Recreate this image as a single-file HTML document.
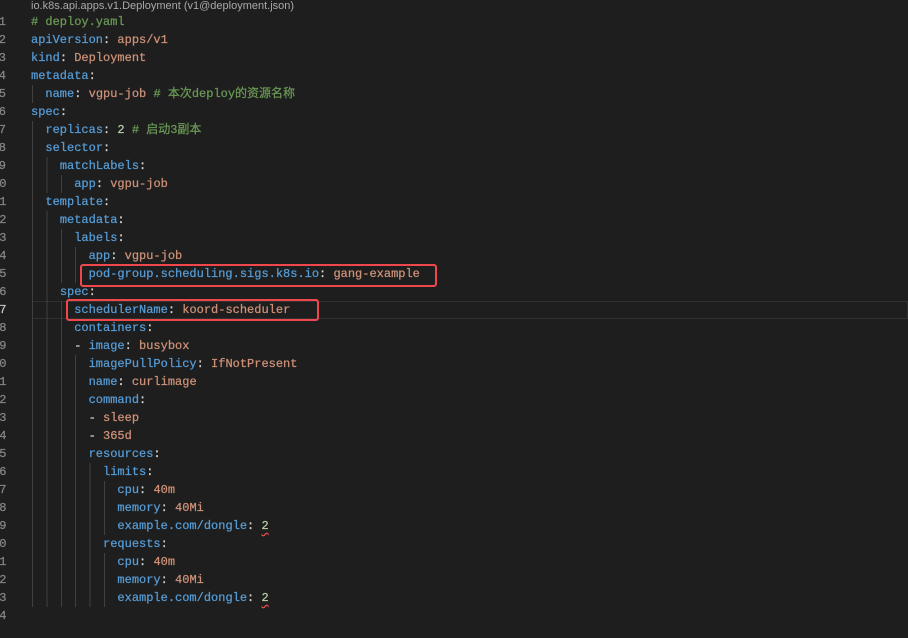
<!DOCTYPE html>
<html><head><meta charset="utf-8"><style>
html,body{margin:0;padding:0;background:#1e1e1e;width:908px;height:638px;overflow:hidden}
.t{position:absolute;left:31px;top:0;font:11px "Liberation Sans",sans-serif;color:#a9a9a9;line-height:12px}
.l{position:absolute;left:0;height:18px;width:908px;font:12px/18px "Liberation Mono","Noto Sans CJK SC",monospace;white-space:pre;color:#d4d4d4;-webkit-text-stroke:0.25px currentColor;margin-top:1px}
.n{position:absolute;left:-8px;width:14px;text-align:right;color:#858585}
.c{position:absolute;left:31px}
.g{position:absolute;left:32px;top:0;height:18px;background:repeating-linear-gradient(to right,#404040 0 1px,transparent 1px 14.4px)}
.k{color:#569cd6}.s{color:#ce9178}.m{color:#6a9955}.d{color:#b5cea8}
.sq{text-decoration:underline wavy #f14c4c;text-underline-offset:3px}
.box{position:absolute;border:2.5px solid #f0474d;border-radius:3px;box-sizing:border-box}
.cur{position:absolute;left:32px;top:301px;width:876px;height:18px;border:1px solid #303030;box-sizing:border-box}
</style></head><body>
<div class="t">io.k8s.api.apps.v1.Deployment (v1@deployment.json)</div>
<div class="cur"></div>
<div class="l" style="top:12px"><span class="n">1</span><span class="c"><span class="m"># deploy.yaml</span></span></div>
<div class="l" style="top:30px"><span class="n">2</span><span class="c"><span class="k">apiVersion</span>: <span class="s">apps/v1</span></span></div>
<div class="l" style="top:48px"><span class="n">3</span><span class="c"><span class="k">kind</span>: <span class="s">Deployment</span></span></div>
<div class="l" style="top:66px"><span class="n">4</span><span class="c"><span class="k">metadata</span>:</span></div>
<div class="l" style="top:84px"><span class="n">5</span><span class="g" style="width:14px"></span><span class="c">  <span class="k">name</span>: <span class="s">vgpu-job</span> <span class="m"># 本次deploy的资源名称</span></span></div>
<div class="l" style="top:102px"><span class="n">6</span><span class="c"><span class="k">spec</span>:</span></div>
<div class="l" style="top:120px"><span class="n">7</span><span class="g" style="width:14px"></span><span class="c">  <span class="k">replicas</span>: <span class="d">2</span> <span class="m"># 启动3副本</span></span></div>
<div class="l" style="top:138px"><span class="n">8</span><span class="g" style="width:14px"></span><span class="c">  <span class="k">selector</span>:</span></div>
<div class="l" style="top:156px"><span class="n">9</span><span class="g" style="width:28px"></span><span class="c">    <span class="k">matchLabels</span>:</span></div>
<div class="l" style="top:174px"><span class="n">10</span><span class="g" style="width:43px"></span><span class="c">      <span class="k">app</span>: <span class="s">vgpu-job</span></span></div>
<div class="l" style="top:192px"><span class="n">11</span><span class="g" style="width:14px"></span><span class="c">  <span class="k">template</span>:</span></div>
<div class="l" style="top:210px"><span class="n">12</span><span class="g" style="width:28px"></span><span class="c">    <span class="k">metadata</span>:</span></div>
<div class="l" style="top:228px"><span class="n">13</span><span class="g" style="width:43px"></span><span class="c">      <span class="k">labels</span>:</span></div>
<div class="l" style="top:246px"><span class="n">14</span><span class="g" style="width:57px"></span><span class="c">        <span class="k">app</span>: <span class="s">vgpu-job</span></span></div>
<div class="l" style="top:264px"><span class="n">15</span><span class="g" style="width:57px"></span><span class="c">        <span class="k">pod-group.scheduling.sigs.k8s.io</span>: <span class="s">gang-example</span></span></div>
<div class="l" style="top:282px"><span class="n">16</span><span class="g" style="width:28px"></span><span class="c">    <span class="k">spec</span>:</span></div>
<div class="l" style="top:300px"><span class="n" style="color:#c6c6c6">17</span><span class="g" style="width:43px"></span><span class="c">      <span class="k">schedulerName</span>: <span class="s">koord-scheduler</span></span></div>
<div class="l" style="top:318px"><span class="n">18</span><span class="g" style="width:43px"></span><span class="c">      <span class="k">containers</span>:</span></div>
<div class="l" style="top:336px"><span class="n">19</span><span class="g" style="width:43px"></span><span class="c">      - <span class="k">image</span>: <span class="s">busybox</span></span></div>
<div class="l" style="top:354px"><span class="n">20</span><span class="g" style="width:57px"></span><span class="c">        <span class="k">imagePullPolicy</span>: <span class="s">IfNotPresent</span></span></div>
<div class="l" style="top:372px"><span class="n">21</span><span class="g" style="width:57px"></span><span class="c">        <span class="k">name</span>: <span class="s">curlimage</span></span></div>
<div class="l" style="top:390px"><span class="n">22</span><span class="g" style="width:57px"></span><span class="c">        <span class="k">command</span>:</span></div>
<div class="l" style="top:408px"><span class="n">23</span><span class="g" style="width:57px"></span><span class="c">        - <span class="s">sleep</span></span></div>
<div class="l" style="top:426px"><span class="n">24</span><span class="g" style="width:57px"></span><span class="c">        - <span class="s">365d</span></span></div>
<div class="l" style="top:444px"><span class="n">25</span><span class="g" style="width:57px"></span><span class="c">        <span class="k">resources</span>:</span></div>
<div class="l" style="top:462px"><span class="n">26</span><span class="g" style="width:72px"></span><span class="c">          <span class="k">limits</span>:</span></div>
<div class="l" style="top:480px"><span class="n">27</span><span class="g" style="width:86px"></span><span class="c">            <span class="k">cpu</span>: <span class="s">40m</span></span></div>
<div class="l" style="top:498px"><span class="n">28</span><span class="g" style="width:86px"></span><span class="c">            <span class="k">memory</span>: <span class="s">40Mi</span></span></div>
<div class="l" style="top:516px"><span class="n">29</span><span class="g" style="width:86px"></span><span class="c">            <span class="k">example.com/dongle</span>: <span class="d sq">2</span></span></div>
<div class="l" style="top:534px"><span class="n">30</span><span class="g" style="width:72px"></span><span class="c">          <span class="k">requests</span>:</span></div>
<div class="l" style="top:552px"><span class="n">31</span><span class="g" style="width:86px"></span><span class="c">            <span class="k">cpu</span>: <span class="s">40m</span></span></div>
<div class="l" style="top:570px"><span class="n">32</span><span class="g" style="width:86px"></span><span class="c">            <span class="k">memory</span>: <span class="s">40Mi</span></span></div>
<div class="l" style="top:588px"><span class="n">33</span><span class="g" style="width:86px"></span><span class="c">            <span class="k">example.com/dongle</span>: <span class="d sq">2</span></span></div>
<div class="l" style="top:606px"><span class="n">34</span></div>
<div class="box" style="left:80px;top:264px;width:357px;height:23px"></div>
<div class="box" style="left:66px;top:299px;width:253px;height:22px"></div>
</body></html>
